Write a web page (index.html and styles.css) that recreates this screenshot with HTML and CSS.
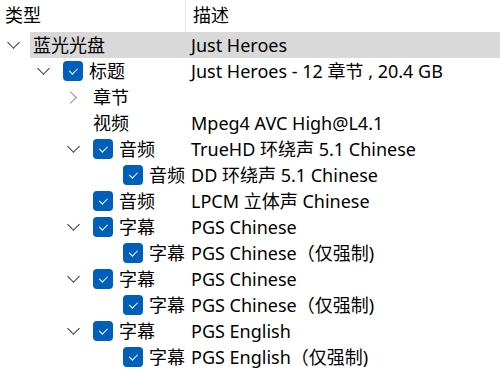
FILE: index.html
```html
<!DOCTYPE html>
<html lang="zh-CN">
<head>
    <meta charset="UTF-8">
    <title>Disc Tree</title>
    <link rel="stylesheet" href="styles.css">
</head>
<body>
    <div class="tree">
        <div class="head">
            <div class="hcol name-col">类型</div>
            <div class="hcol">描述</div>
        </div>

        <div class="row lv0">
            <div class="name">
                <span class="twist open"></span>
                <span class="label sel">蓝光光盘</span>
            </div>
            <div class="desc sel">Just Heroes</div>
        </div>
        <div class="row lv1">
            <div class="name">
                <span class="twist open"></span>
                <span class="label"><i class="check"></i>标题</span>
            </div>
            <div class="desc">Just Heroes - 12 章节 , 20.4 GB</div>
        </div>
        <div class="row lv2">
            <div class="name">
                <span class="twist closed"></span>
                <span class="label">章节</span>
            </div>
            <div class="desc"></div>
        </div>
        <div class="row lv2">
            <div class="name">
                <span class="twist"></span>
                <span class="label">视频</span>
            </div>
            <div class="desc">Mpeg4 AVC High@L4.1</div>
        </div>
        <div class="row lv2">
            <div class="name">
                <span class="twist open"></span>
                <span class="label"><i class="check"></i>音频</span>
            </div>
            <div class="desc">TrueHD 环绕声 5.1 Chinese</div>
        </div>
        <div class="row lv3">
            <div class="name">
                <span class="twist"></span>
                <span class="label"><i class="check"></i>音频</span>
            </div>
            <div class="desc">DD 环绕声 5.1 Chinese</div>
        </div>
        <div class="row lv2">
            <div class="name">
                <span class="twist"></span>
                <span class="label"><i class="check"></i>音频</span>
            </div>
            <div class="desc">LPCM 立体声 Chinese</div>
        </div>
        <div class="row lv2">
            <div class="name">
                <span class="twist open"></span>
                <span class="label"><i class="check"></i>字幕</span>
            </div>
            <div class="desc">PGS Chinese</div>
        </div>
        <div class="row lv3">
            <div class="name">
                <span class="twist"></span>
                <span class="label"><i class="check"></i>字幕</span>
            </div>
            <div class="desc">PGS Chinese（仅强制)</div>
        </div>
        <div class="row lv2">
            <div class="name">
                <span class="twist open"></span>
                <span class="label"><i class="check"></i>字幕</span>
            </div>
            <div class="desc">PGS Chinese</div>
        </div>
        <div class="row lv3">
            <div class="name">
                <span class="twist"></span>
                <span class="label"><i class="check"></i>字幕</span>
            </div>
            <div class="desc">PGS Chinese（仅强制)</div>
        </div>
        <div class="row lv2">
            <div class="name">
                <span class="twist open"></span>
                <span class="label"><i class="check"></i>字幕</span>
            </div>
            <div class="desc">PGS English</div>
        </div>
        <div class="row lv3">
            <div class="name">
                <span class="twist"></span>
                <span class="label"><i class="check"></i>字幕</span>
            </div>
            <div class="desc">PGS English（仅强制)</div>
        </div>
    </div>
</body>
</html>
```

FILE: styles.css
```css
body {
    margin: 0;
    background: #fff;
    font-family: "Noto Sans", "Noto Sans CJK SC", sans-serif;
    font-size: 18px;
    color: #000;
    overflow: hidden;
}
.tree {
    width: 500px;
}
.head {
    display: flex;
    height: 32px;
}
.hcol {
    line-height: 30px;
    padding-left: 7px;
}
.hcol.name-col {
    width: 180px;
    padding-left: 5px;
    border-right: 1px solid #e5e5e5;
}
.row {
    display: flex;
    height: 26px;
    line-height: 26px;
}
.name {
    width: 187px;
    display: flex;
    flex-shrink: 0;
}
.lv1 .name { padding-left: 30px; width: 157px; }
.lv2 .name { padding-left: 60px; width: 127px; }
.lv3 .name { padding-left: 90px; width: 97px; }
.twist {
    width: 30px;
    flex-shrink: 0;
    position: relative;
}
.twist.open::before,
.twist.closed::before {
    content: "";
    position: absolute;
    width: 8px;
    height: 8px;
    border-right: 1.2px solid #333;
    border-bottom: 1.2px solid #333;
}
.twist.open::before {
    left: 9px;
    top: 6px;
    transform: rotate(45deg);
}
.twist.closed::before {
    left: 6px;
    top: 9px;
    border-color: #888;
    transform: rotate(-45deg);
}
.label {
    flex: 1;
    display: flex;
    align-items: center;
    padding-left: 3px;
    white-space: nowrap;
}
.desc {
    flex: 1;
    padding-left: 4px;
    white-space: nowrap;
}
.sel {
    background: #d9d9d9;
}
.check {
    width: 20px;
    height: 20px;
    margin-right: 6px;
    border-radius: 4px;
    background: #005fb8;
    position: relative;
    flex-shrink: 0;
}
.check::after {
    content: "";
    position: absolute;
    left: 7.5px;
    top: 5px;
    width: 3.5px;
    height: 7px;
    border-right: 1px solid #fff;
    border-bottom: 1px solid #fff;
    transform: rotate(45deg);
}
```
